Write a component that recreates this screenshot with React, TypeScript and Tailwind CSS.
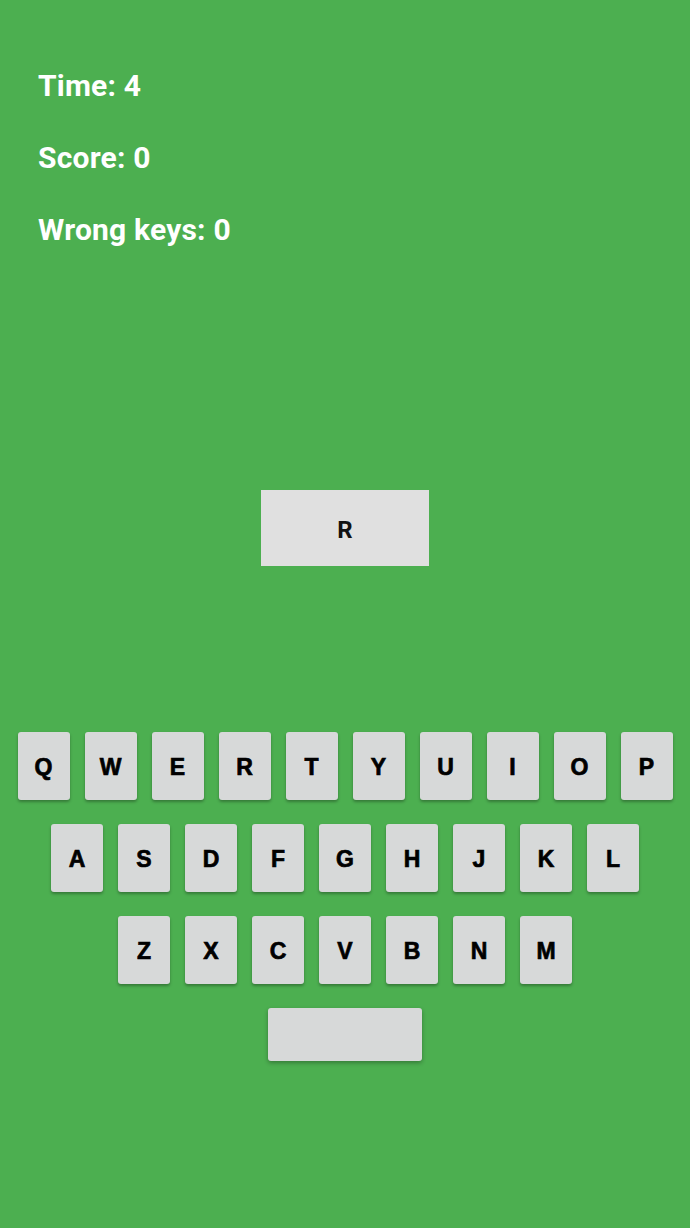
const rows = [
  ["Q", "W", "E", "R", "T", "Y", "U", "I", "O", "P"],
  ["A", "S", "D", "F", "G", "H", "J", "K", "L"],
  ["Z", "X", "C", "V", "B", "N", "M"],
];

function Key({ label }: { label: string }) {
  return (
    <div className="w-[52px] h-[68px] pt-[3px] rounded-[3px] bg-[#d7d9d9] shadow-[0_2px_3px_rgba(0,0,0,0.3)] flex items-center justify-center text-[23px] font-bold text-black [-webkit-text-stroke:0.7px_black] font-['Liberation_Sans',Arial,sans-serif]">
      {label}
    </div>
  );
}

export default function App() {
  return (
    <div className="min-h-[1228px] w-full bg-[#4caf50] font-['Roboto',sans-serif]">
      <div className="pt-[68px] pl-[38px] flex flex-col gap-[37px] text-white font-bold text-[30px] leading-[35px] tracking-[0.2px]">
        <p>Time: 4</p>
        <p>Score: 0</p>
        <p>Wrong keys: 0</p>
      </div>

      <div className="mt-[243px] flex justify-center">
        <div className="w-[168px] h-[76px] pt-[3px] bg-[#e0e0e0] flex items-center justify-center text-[24px] font-bold text-[#111]">
          R
        </div>
      </div>

      <div className="mt-[166px] flex flex-col items-center gap-[24px]">
        {rows.map((row, i) => (
          <div key={i} className="flex gap-[15px]">
            {row.map((k) => (
              <Key key={k} label={k} />
            ))}
          </div>
        ))}
        <div className="w-[154px] h-[53px] rounded-[3px] bg-[#d7d9d9] shadow-[0_2px_4px_rgba(0,0,0,0.3)]" />
      </div>
    </div>
  );
}
